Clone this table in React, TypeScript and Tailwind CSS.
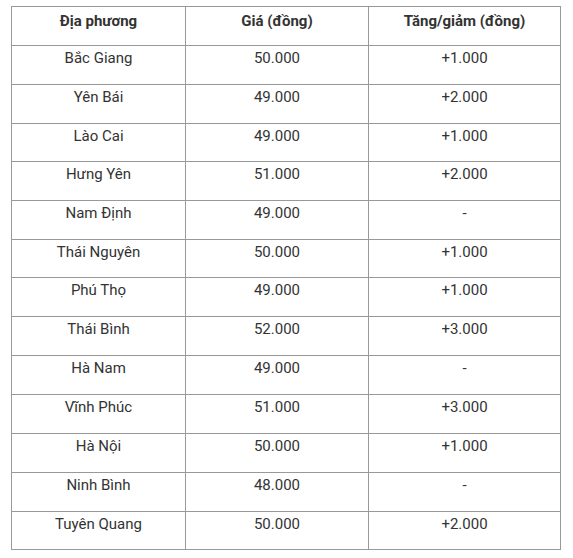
import React from "react";

const rows: [string, string, string][] = [
  ["Bắc Giang", "50.000", "+1.000"],
  ["Yên Bái", "49.000", "+2.000"],
  ["Lào Cai", "49.000", "+1.000"],
  ["Hưng Yên", "51.000", "+2.000"],
  ["Nam Định", "49.000", "-"],
  ["Thái Nguyên", "50.000", "+1.000"],
  ["Phú Thọ", "49.000", "+1.000"],
  ["Thái Bình", "52.000", "+3.000"],
  ["Hà Nam", "49.000", "-"],
  ["Vĩnh Phúc", "51.000", "+3.000"],
  ["Hà Nội", "50.000", "+1.000"],
  ["Ninh Bình", "48.000", "-"],
  ["Tuyên Quang", "50.000", "+2.000"],
];

// row heights (including bottom border) to match reference line positions
const heights = [39, 39, 38, 39, 39, 38, 39, 39, 39, 39, 39, 39, 38];

export default function App() {
  return (
    <div className="w-[573px] h-[558px] bg-white pt-[6px] pl-[11px] font-['Roboto',sans-serif] text-[#333] text-[15px]">
      <table className="border-collapse table-fixed w-[549px]">
        <colgroup>
          <col className="w-[174px]" />
          <col className="w-[183px]" />
          <col className="w-[192px]" />
        </colgroup>
        <thead>
          <tr className="h-[39px]">
            <th className="border border-[#999] align-top pt-[3px] leading-[22px] font-bold text-center">Địa phương</th>
            <th className="border border-[#999] align-top pt-[3px] leading-[22px] font-bold text-center">Giá (đồng)</th>
            <th className="border border-[#999] align-top pt-[3px] leading-[22px] font-bold text-center">Tăng/giảm (đồng)</th>
          </tr>
        </thead>
        <tbody>
          {rows.map((r, i) => (
            <tr key={i} style={{ height: heights[i] }}>
              {r.map((c, j) => (
                <td key={j} className="border border-[#999] align-top pt-[1px] leading-[22px] text-center">
                  {c}
                </td>
              ))}
            </tr>
          ))}
        </tbody>
      </table>
    </div>
  );
}
